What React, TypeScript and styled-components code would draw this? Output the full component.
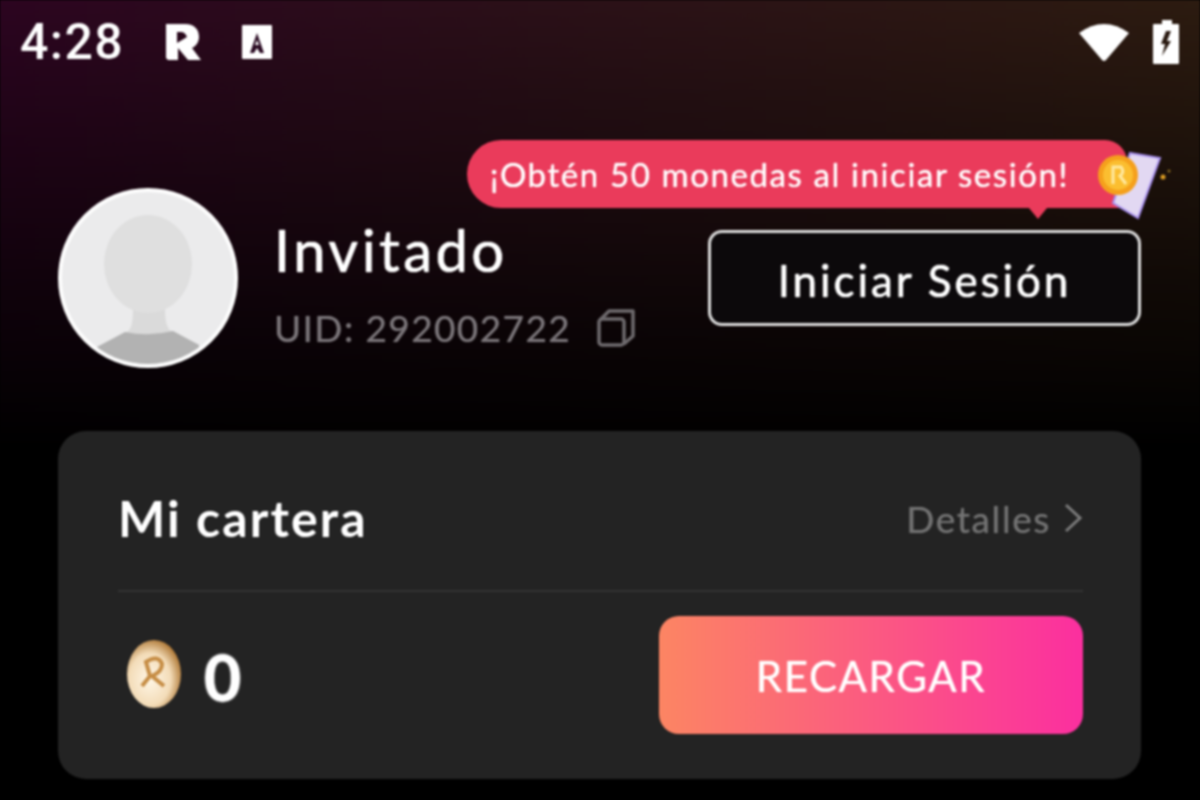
import styled, { createGlobalStyle } from 'styled-components'

const GlobalStyle = createGlobalStyle`
  html, body {
    margin: 0;
    padding: 0;
    background: #000;
  }
  * { box-sizing: border-box; }
`

const Screen = styled.div`
  position: relative;
  width: 1200px;
  height: 800px;
  overflow: hidden;
  font-family: Lato, 'Open Sans', sans-serif;
  color: #fff;
  filter: blur(0.8px);
  background:
    linear-gradient(180deg, rgba(0,0,0,0) 0%, rgba(0,0,0,0.5) 28%, #000 56%),
    linear-gradient(90deg, #2c0520 0%, #2b1018 45%, #2c1b10 100%);
`

const StatusBar = styled.div`
  height: 84px;
  padding: 0 21px 0 20px;
  display: flex;
  align-items: center;
`

const Clock = styled.span`
  font-family: Roboto, sans-serif;
  font-size: 50px;
  font-weight: 500;
  width: 102px;
  letter-spacing: 1.4px;
  white-space: nowrap;
`

const StatusIcons = styled.div`
  margin-left: 43px;
  display: flex;
  align-items: center;
  gap: 40px;
`

const StatusRight = styled.div`
  margin-left: auto;
  display: flex;
  align-items: center;
  gap: 23px;
`

const Content = styled.div`
  padding: 0 59px 0 58px;
`

const Profile = styled.div`
  height: 347px;
  padding-top: 104px;
  display: flex;
  align-items: flex-start;
`

const Avatar = styled.div`
  width: 180px;
  height: 180px;
  border-radius: 50%;
  border: 4px solid #fdfdfd;
  overflow: hidden;
  flex-shrink: 0;
  background: #ebebec;
`

const Identity = styled.div`
  margin-left: 36px;
  padding-top: 27px;
  display: flex;
  flex-direction: column;
`

const Name = styled.div`
  font-size: 58px;
  line-height: 70px;
  letter-spacing: 3.4px;
  text-shadow: 0 0 1px #fff, 0 0 1px #fff;
`

const UidRow = styled.div`
  display: flex;
  align-items: center;
  gap: 26px;
  margin-top: 21px;
  font-size: 37px;
  line-height: 44px;
  color: #7a7579;
  letter-spacing: 1.4px;
  text-shadow: 0 0 1px #716c70;
`

const LoginButton = styled.button`
  margin-left: auto;
  margin-top: 42px;
  width: 433px;
  height: 96px;
  padding-top: 5px;
  border: 3px solid #dcdcdc;
  border-radius: 14px;
  background: #0c090b;
  color: #fff;
  font-family: inherit;
  font-size: 44px;
  letter-spacing: 2.9px;
  text-shadow: 0 0 1px #fff, 0 0 1px #fff;
`

const Tooltip = styled.div`
  position: absolute;
  left: 467px;
  top: 140px;
  width: 660px;
  height: 68px;
  padding-left: 23px;
  display: flex;
  align-items: center;
  background: #ea3b5b;
  border-radius: 34px 22px 0 34px;
  font-size: 33px;
  white-space: nowrap;
  letter-spacing: 1.6px;
  text-shadow: 0 0 1px #fff;
  &::after {
    content: '';
    position: absolute;
    left: 562px;
    bottom: -11px;
    border-left: 9px solid transparent;
    border-right: 9px solid transparent;
    border-top: 11px solid #ea3b5b;
  }
`

const TooltipArt = styled.svg`
  position: absolute;
  left: 625px;
  top: 8px;
`

const Wallet = styled.section`
  height: 348px;
  padding: 0 58px 0 60px;
  background: #232323;
  border-radius: 28px;
`

const WalletHeader = styled.div`
  height: 161px;
  padding-top: 15px;
  border-bottom: 2px solid #333;
  display: flex;
  align-items: center;
  justify-content: space-between;
`

const WalletTitle = styled.h2`
  margin: 0;
  font-size: 50px;
  font-weight: 700;
  letter-spacing: 2.1px;
`

const Details = styled.div`
  display: flex;
  align-items: center;
  gap: 12px;
  font-size: 37px;
  letter-spacing: 1.6px;
  color: #727272;
  text-shadow: 0 0 1px #6b6b6b;
`

const WalletBody = styled.div`
  padding-top: 24px;
  display: flex;
  align-items: flex-start;
`

const Balance = styled.div`
  display: flex;
  align-items: center;
  gap: 22px;
  margin: 24px 0 0 8px;
  font-size: 64px;
  font-weight: 700;
  line-height: 68px;
`

const BalanceValue = styled.span`
  position: relative;
  top: 3px;
  text-shadow: 0 0 2px #fff, 0 0 2px #fff;
`

const RechargeButton = styled.button`
  margin-left: auto;
  width: 424px;
  height: 118px;
  padding-top: 3px;
  border: 0;
  border-radius: 20px;
  background: linear-gradient(90deg, #fc8563 0%, #fb2f9f 100%);
  color: #fff;
  font-family: inherit;
  font-size: 42px;
  letter-spacing: 1.6px;
  text-shadow: 0 0 1px #fff;
`

const AvatarArt = () => (
  <svg width="172" height="172" viewBox="1 1 172 172">
    <path d="M36 156 L66 141 Q72 138 72 118 H104 Q104 136 110 140 L138 154 V174 H36 Z" fill="#dadada" />
    <path d="M36 156 L64 141 Q88 146 112 140 L138 154 V174 H36 Z" fill="#b2b2b2" />
    <ellipse cx="87" cy="73" rx="44" ry="49" fill="#dfdfdf" />
  </svg>
)

const App = () => {
  return (
    <>
      <GlobalStyle />
      <Screen>
        <StatusBar>
          <Clock>4:28</Clock>
          <StatusIcons>
            <svg width="36" height="38" viewBox="0 0 36 38">
              <path
                fillRule="evenodd"
                fill="#fff"
                d="M1 1 H20 C30 1 34 7 34 14 C34 19 31 23 27 25 L36 37 H23 L13 25 V37 H3 L1 35 Z M12 9 V20 L22 14 Q20 9 16 9 Z"
              />
            </svg>
            <svg width="32" height="38" viewBox="0 0 32 38">
              <rect x="1" y="2" width="30" height="34" rx="1" fill="#fff" />
              <path d="M16 10 L9 30 H13 L16 25 L19 30 H23 Z M16 17 L18 22 H14 Z" fill="#2a0a22" fillRule="evenodd" />
            </svg>
          </StatusIcons>
          <StatusRight>
            <svg width="52" height="42" viewBox="0 0 52 42">
              <path d="M1 12 Q26 -6 51 12 L28 39 Q26 41 24 39 Z" fill="#fff" />
            </svg>
            <svg width="26" height="44" viewBox="0 0 26 44">
              <path
                fillRule="evenodd"
                fill="#fff"
                d="M9 0 H19 V4 H25 Q26 4 26 5 V43 Q26 44 25 44 H1 Q0 44 0 43 V5 Q0 4 1 4 H9 Z M13 11 L8 24 H12 L9 36 L18 21 H14 L18 11 Z"
              />
            </svg>
          </StatusRight>
        </StatusBar>

        <Tooltip>
          ¡Obtén 50 monedas al iniciar sesión!
          <TooltipArt width="80" height="72" viewBox="0 0 80 72">
            <path d="M38 5 L68 10 L46 70 L21 55 Z" fill="#e2d8f2" stroke="#a48cec" strokeWidth="2" />
            <circle cx="26" cy="27" r="20" fill="#f5a01c" />
            <circle cx="26" cy="27" r="15" fill="#fbbe30" />
            <path d="M21 36 V19 H29 Q33 24 28 28 L34 36" fill="none" stroke="#ffe9a0" strokeWidth="3" />
            <circle cx="71" cy="29" r="2.5" fill="#d99a22" />
            <circle cx="77" cy="23" r="1.5" fill="#8a6a20" />
          </TooltipArt>
        </Tooltip>

        <Content>
          <Profile>
            <Avatar>
              <AvatarArt />
            </Avatar>
            <Identity>
              <Name>Invitado</Name>
              <UidRow>
                UID: 292002722
                <svg width="38" height="38" viewBox="0 0 38 38" fill="none" stroke="#6e6a6d" strokeWidth="3.5" strokeLinejoin="round">
                  <rect x="2" y="10" width="25" height="26" rx="3" />
                  <path d="M3 11 L12 2 H36 V27 L27 35" />
                </svg>
              </UidRow>
            </Identity>
            <LoginButton>Iniciar Sesión</LoginButton>
          </Profile>

          <Wallet>
            <WalletHeader>
              <WalletTitle>Mi cartera</WalletTitle>
              <Details>
                Detalles
                <svg width="20" height="32" viewBox="0 0 20 32" fill="none" stroke="#7a7a7a" strokeWidth="3">
                  <path d="M3 3 L17 16 L3 29" />
                </svg>
              </Details>
            </WalletHeader>
            <WalletBody>
              <Balance>
                <svg width="56" height="68" viewBox="0 0 56 68">
                  <defs>
                    <radialGradient id="coin" cx="42%" cy="58%" r="62%">
                      <stop offset="0%" stopColor="#fff6e6" />
                      <stop offset="62%" stopColor="#f3dcb8" />
                      <stop offset="100%" stopColor="#ac7430" />
                    </radialGradient>
                  </defs>
                  <ellipse cx="28" cy="34" rx="27" ry="34" fill="url(#coin)" />
                  <path d="M16 46 L24 36 L20 22 Q32 14 36 24 Q36 32 26 36 L38 46" fill="none" stroke="#c68d45" strokeWidth="4" />
                </svg>
                <BalanceValue>0</BalanceValue>
              </Balance>
              <RechargeButton>RECARGAR</RechargeButton>
            </WalletBody>
          </Wallet>
        </Content>
      </Screen>
    </>
  )
}

export default App
